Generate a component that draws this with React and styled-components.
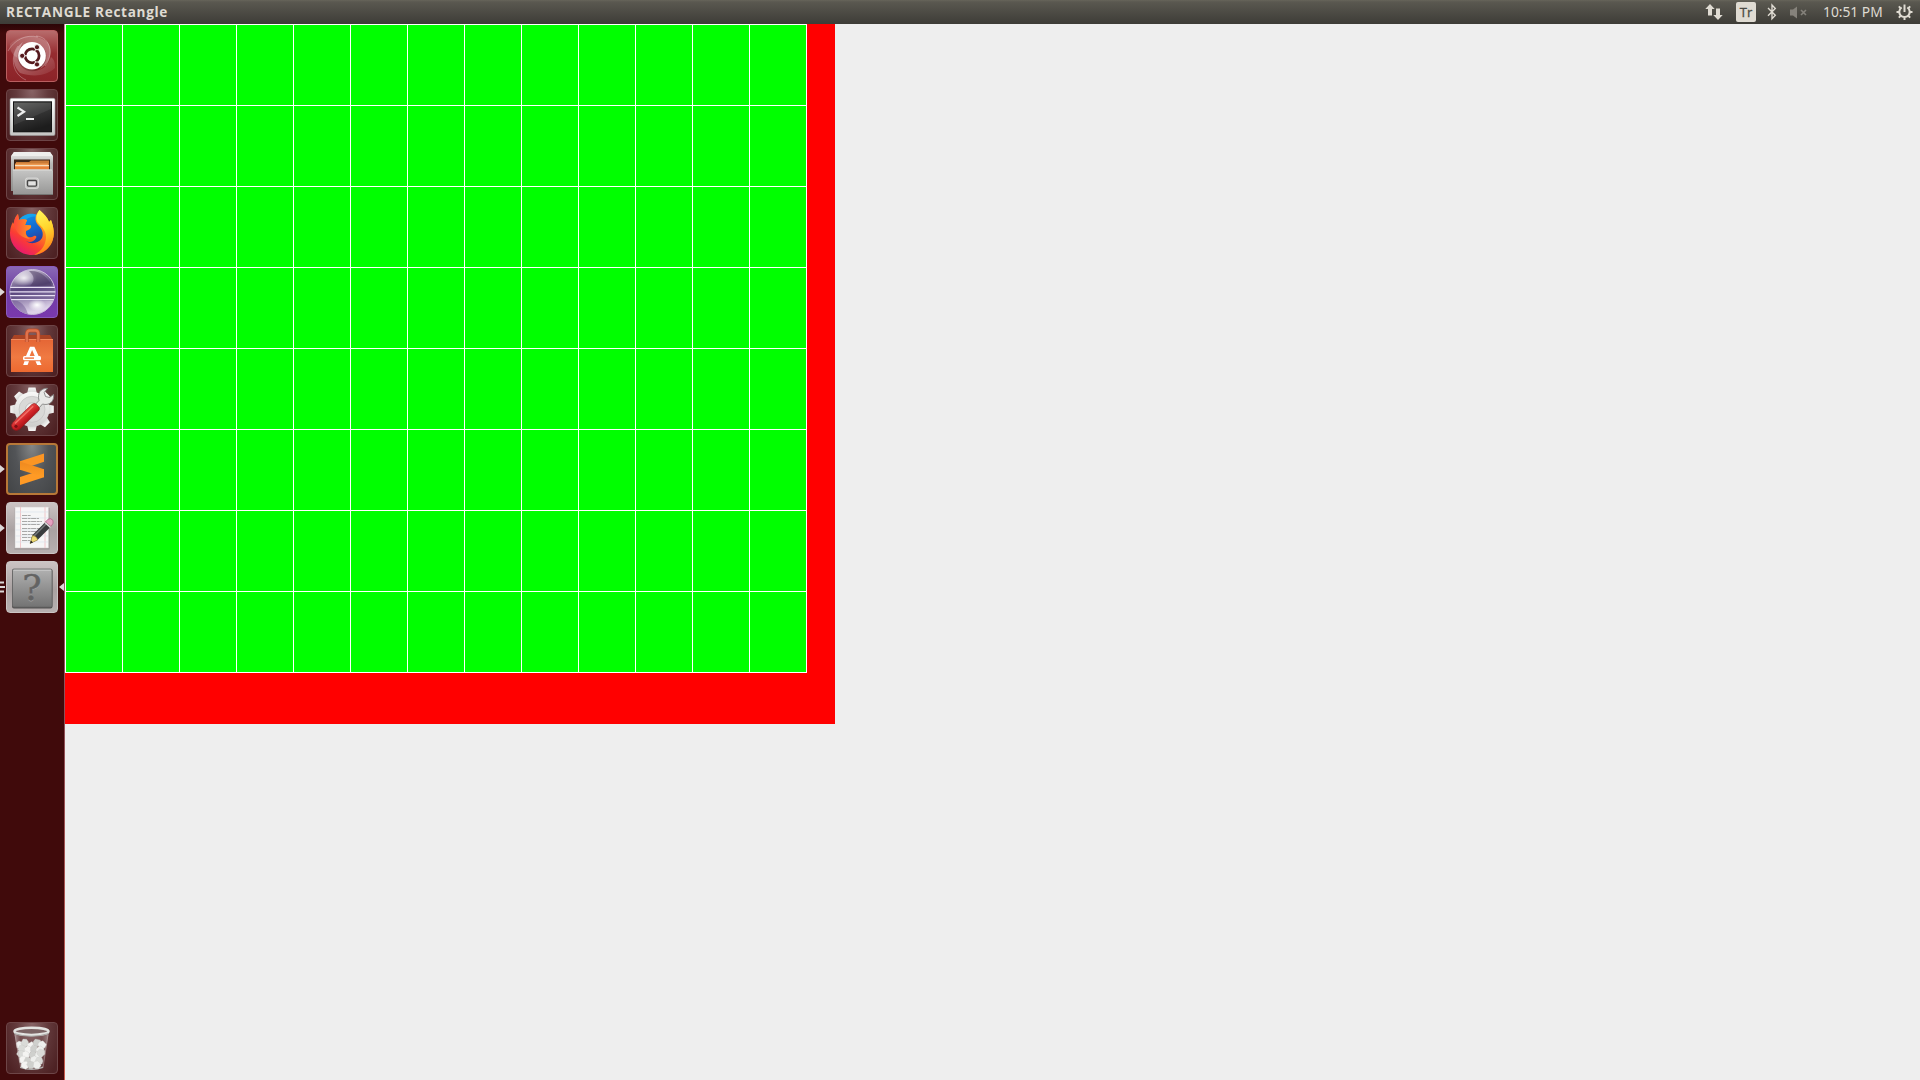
import React from "react";
import styled, { createGlobalStyle, css } from "styled-components";

const Global = createGlobalStyle`
  html, body { margin: 0; padding: 0; }
  body { background: #eeeeee; overflow: hidden; font-family: "Noto Sans", "Open Sans", sans-serif; }
`;

const Desktop = styled.div`
  display: flex;
  flex-direction: column;
  width: 1920px;
  height: 1080px;
  background: #eeeeee;
`;

const TopBar = styled.header`
  display: flex;
  align-items: center;
  justify-content: space-between;
  box-sizing: border-box;
  flex: none;
  height: 24px;
  padding: 0 7px 0 6px;
  color: #dfdbd2;
  background: linear-gradient(#67655a 0, #5a5850 2px, #3d3c37 100%);
`;

const Title = styled.h1`
  margin: 0;
  font: 700 13.6px/24px "Open Sans", "Noto Sans", sans-serif;
  letter-spacing: 0.68px;
  white-space: nowrap;
`;

const Tray = styled.div`
  display: flex;
  align-items: center;
  height: 24px;
`;

const TrayIcon = styled.svg`
  display: block;
  flex: none;
  margin-right: ${(p) => p.$gap || 0}px;
`;

const Keyboard = styled.span`
  width: 20px;
  height: 20px;
  margin-right: 11px;
  border-radius: 2px;
  background: #dfdbd2;
  color: #4b4a44;
  font: 400 13px/21px "Open Sans", "Noto Sans", sans-serif;
  -webkit-text-stroke: 0.3px #4b4a44;
  text-align: center;
`;

const Clock = styled.time`
  width: 61px;
  margin-right: 12px;
  font: 400 13.8px/24px "Noto Sans", sans-serif;
  white-space: nowrap;
`;

const Workspace = styled.div`
  display: flex;
  flex: 1;
  min-height: 0;
`;

const Launcher = styled.nav`
  display: flex;
  flex-direction: column;
  box-sizing: border-box;
  flex: none;
  width: 64px;
  padding: 6px 0 6px 6px;
  gap: 7px;
  background: linear-gradient(#2b0506 0, #400a0b 9px, #400a0b 100%);
`;

const LauncherEdge = styled.div`
  flex: none;
  width: 1px;
  background: linear-gradient(#c08a98 0, #a8707c 40%, #8c5058 65%, #c85a4c 100%);
`;

const tones = {
  red: css`background: linear-gradient(#b86c6c, #962c30 45%, #8c2328); border-color: #b95f60;`,
  dark: css`background: radial-gradient(ellipse at 50% 0, #886466 0, #633a3c 45%, #4e2224 90%); border-color: #6d4547;`,
  purple: css`background: linear-gradient(#8a68b5, #6f3fa3 45%, #7a38ae); border-color: #8a5bbd;`,
  slate: css`background: radial-gradient(ellipse at 50% 0, #858787, #525457 50%, #424446); border: 2px solid #b87838;`,
  silver: css`background: linear-gradient(#cbc3c3, #aaa2a2 55%, #b7b0b0); border-color: #cbc5c5;`,
};

const Tile = styled.div`
  position: relative;
  box-sizing: border-box;
  flex: none;
  width: 52px;
  height: 52px;
  margin-top: ${(p) => (p.$last ? "auto" : 0)};
  border: 1px solid transparent;
  border-radius: 4px;
  background-origin: border-box;
  ${(p) => tones[p.$tone]}
`;

const Art = styled.svg`
  position: absolute;
  inset: ${(p) => (p.$thick ? "-2px" : "-1px")};
  width: 52px;
  height: 52px;
`;

const Marker = styled.svg`
  position: absolute;
  top: ${(p) => (p.$thick ? 17.5 : 18.5)}px;
  left: ${(p) => (p.$right ? 52 : p.$thick ? -8 : -7)}px;
`;

const Canvas = styled.main`
  box-sizing: border-box;
  flex: none;
  width: 770px;
  height: 700px;
  background: #ff0000;
`;

const Grid = styled.div`
  display: grid;
  box-sizing: border-box;
  grid-template-columns: repeat(13, 57px);
  grid-auto-rows: 81px;
  width: 742px;
  height: 649px;
  border-top: 1px solid #fff;
  border-left: 1px solid #fff;
`;

const Cell = styled.div`
  background: #00ff00;
  border-right: 1px solid #fff;
  border-bottom: 1px solid #fff;
`;

const Dash = () => (
  <>
    <defs>
      <linearGradient id="swA" x1="0" y1="0" x2="1" y2="1">
        <stop offset="0" stopColor="#fff" stopOpacity=".05" />
        <stop offset="1" stopColor="#fff" stopOpacity=".4" />
      </linearGradient>
      <linearGradient id="swB" x1="1" y1="1" x2="0" y2="0">
        <stop offset="0" stopColor="#fff" stopOpacity=".05" />
        <stop offset="1" stopColor="#fff" stopOpacity=".4" />
      </linearGradient>
    </defs>
    <path d="M4 14C16 3 34 5 42 13C48 22 43 34 34 39C42 27 36 13 24 13C15 13 11 20 12 28C4 24 4 18 4 14Z" fill="url(#swA)" />
    <path d="M49 38C38 48 24 46 14 43C4 33 7 19 17 12C10 23 14 37 25 40C35 42 41 37 45 27C49 30 49 34 49 38Z" fill="url(#swB)" />
    <path d="M30 6C45 7 48 25 39 36M20 50C6 44 4 27 12 16M2 21C8 10 20 4 32 7" fill="none" stroke="#fff" strokeOpacity=".28" />
    <circle cx="26" cy="26.8" r="14.4" fill="#4a0e12" fillOpacity=".3" />
    <circle cx="26" cy="25.8" r="13.8" fill="#fff" />
    <circle cx="26.1" cy="25.8" r="7" fill="none" stroke="#55191d" strokeWidth="2.8" />
    <path d="M26 25.8L32 36.2M26 25.8L14 25.8M26 25.8L32 15.4" stroke="#fff" strokeWidth="1" />
    <g fill="#55191d" stroke="#fff" strokeWidth=".9">
      <circle cx="16.2" cy="25.8" r="2.6" /><circle cx="31" cy="17.2" r="2.6" /><circle cx="31" cy="34.4" r="2.6" />
    </g>
  </>
);

const Terminal = () => (
  <>
    <defs>
      <linearGradient id="tmF" x2="0" y2="1"><stop stopColor="#fff" /><stop offset="1" stopColor="#c5c5c3" /></linearGradient>
      <linearGradient id="tmS" x2=".35" y2="1"><stop stopColor="#5b5c5a" /><stop offset=".5" stopColor="#353535" /><stop offset="1" stopColor="#1d1d1d" /></linearGradient>
    </defs>
    <rect x="4" y="9.3" width="45" height="37.2" rx="1.5" fill="url(#tmF)" stroke="#999" strokeWidth=".6" />
    <rect x="7" y="12.3" width="39" height="31" fill="#141414" />
    <rect x="8" y="13.5" width="37" height="29" fill="url(#tmS)" />
    <path d="M8 13.5H45V20L8 36Z" fill="#fff" fillOpacity=".07" />
    <path d="M11.5 18.5L18 22.7L11.5 27" fill="none" stroke="#eee" strokeWidth="2.2" />
    <path d="M20 30H28" stroke="#eee" strokeWidth="2" />
  </>
);

const Files = () => (
  <>
    <defs>
      <linearGradient id="flA" x2="0" y2="1"><stop stopColor="#ededeb" /><stop offset=".3" stopColor="#b9b9b7" /><stop offset="1" stopColor="#8e8e8c" /></linearGradient>
      <linearGradient id="flB" x2="0" y2="1"><stop stopColor="#c6c6c5" /><stop offset="1" stopColor="#969695" /></linearGradient>
    </defs>
    <path d="M8 4H44L47 8V43H5V8Z" fill="url(#flA)" />
    <path d="M8 4H44L46.5 8H5.5Z" fill="#efefed" />
    <rect x="8" y="11.5" width="36" height="11" fill="#3c2518" />
    <path d="M10 14H23L25 12.5H43V22H10Z" fill="#c97a36" />
    <path d="M9 15.5H42V22H9Z" fill="#ee9a51" />
    <path d="M9 17H43V18.5H9Z" fill="#f8dcb8" />
    <path d="M9 18.5H43V22H9Z" fill="#e8823a" />
    <path d="M7 21.5H45L47 23V46Q47 47 46 47H8Q7 47 7 46Z" fill="url(#flB)" />
    <path d="M7 22H46" stroke="#dededc" />
    <path d="M7 46.5H47" stroke="#747472" />
    <rect x="19.5" y="30" width="13" height="10.5" rx="2" fill="#c5c5c3" stroke="#dededd" strokeWidth=".8" />
    <rect x="21.5" y="32.5" width="9" height="5.6" rx="1" fill="#e2e2e1" stroke="#464646" strokeWidth="1.4" />
  </>
);

const Firefox = () => (
  <>
    <defs>
      <linearGradient id="fxR" x1=".85" y1="0" x2=".2" y2="1"><stop stopColor="#ffcf2e" /><stop offset=".4" stopColor="#ff8a1c" /><stop offset=".7" stopColor="#fb3c34" /><stop offset="1" stopColor="#e3127b" /></linearGradient>
      <linearGradient id="fxY" x1=".3" y1="0" x2=".5" y2="1"><stop stopColor="#fff45a" /><stop offset=".45" stopColor="#ffd52c" /><stop offset="1" stopColor="#ff7a17" /></linearGradient>
      <linearGradient id="fxB" x2=".4" y2="1"><stop stopColor="#159bf0" /><stop offset=".55" stopColor="#1269cf" /><stop offset="1" stopColor="#303490" /></linearGradient>
      <linearGradient id="fxL" x1="0" x2="1"><stop stopColor="#ff473c" /><stop offset="1" stopColor="#ff9820" /></linearGradient>
    </defs>
    <circle cx="26" cy="24" r="17" fill="url(#fxB)" />
    <path d="M13 13C15 10 18 8 22 7C28 6 33 8 35 12L32 10C24 8 19 13 17 16Z" fill="#14a4ee" />
    <path d="M33.5 3C38 7 42 11 43 15L45 13C48 21 49 28 46 35C42 44 34 48 26 48C14 48 4 39 4 26C4 22 5 18 7 15L8 17C8 13 9 10 12 7L13 13C16 12 19 12 21 13L19 18L25 18.5C26 22 22 23 20 24L20 27C21 31 25 31 28 29C30 28 31 30 30 31C28 35 23 36 20 34C25 38 33 36 36 31C38 26 36 22 32 18C28 13 29 8 33.5 3Z" fill="url(#fxR)" />
    <path d="M33.5 3C38 7 42 11 43 15L45 13C48 21 49 28 46 35C43 42 36 47 28 48C36 44 40 37 40 30C40 24 36 20 33 17C29 13 30 8 33.5 3Z" fill="url(#fxY)" />
    <path d="M12 7L13 13C16 12 19 12 21 13L19 18L25 18.5C25 22 21 23 20 24C19 27 21 31 25 32C15 31 10 26 8 17C8 13 9 10 12 7Z" fill="url(#fxL)" />
  </>
);

const Eclipse = () => (
  <>
    <defs>
      <linearGradient id="ecA" x2=".25" y2="1"><stop stopColor="#f0ecf5" /><stop offset=".24" stopColor="#a093b2" /><stop offset=".48" stopColor="#57467a" /><stop offset=".68" stopColor="#9585ae" /><stop offset="1" stopColor="#ddd2e9" /></linearGradient>
      <radialGradient id="ecB"><stop stopColor="#fff" /><stop offset="1" stopColor="#fff" stopOpacity="0" /></radialGradient>
      <clipPath id="ecC"><circle cx="26.5" cy="26" r="22.8" /></clipPath>
    </defs>
    <circle cx="26.5" cy="26" r="22.5" fill="url(#ecA)" stroke="#c9bdd9" strokeWidth="1" />
    <g clipPath="url(#ecC)">
      <ellipse cx="18" cy="12" rx="13" ry="8" fill="url(#ecB)" fillOpacity=".85" />
      <path d="M23 5C35 4 42 12 46 20H24C29 15 29 10 23 5Z" fill="#493960" fillOpacity=".5" />
      <path d="M4 34C13 33 20 39 22 49C11 47 5 40 4 34Z" fill="#6b5290" fillOpacity=".45" />
      <path d="M3 20.5H50V34.5H3Z" fill="#58447e" fillOpacity=".6" />
      <ellipse cx="31" cy="39" rx="9" ry="6" fill="url(#ecB)" />
      <path d="M3 21.4H50M3 25.8H50M3 29.7H50M3 33.7H50" stroke="#e8e0f3" strokeWidth="1.25" />
    </g>
  </>
);

const Software = () => (
  <>
    <defs><linearGradient id="sfA" x2="0" y2="1"><stop stopColor="#e46535" /><stop offset=".55" stopColor="#f07a42" /><stop offset="1" stopColor="#ed6930" /></linearGradient></defs>
    <path d="M5 15L8 10H44L47 15Z" fill="#a94324" />
    <rect x="5" y="14" width="42" height="33" rx=".5" fill="url(#sfA)" />
    <path d="M5 14.5H47" stroke="#f18a5c" />
    <path d="M20.8 17V9Q21 5.5 24 5.5H29.5Q32.3 5.5 32.3 9V17" fill="none" stroke="#b64a29" strokeWidth="3.8" />
    <path d="M20.8 17V9Q21 5.5 24 5.5H29.5Q32.3 5.5 32.3 9V17" fill="none" stroke="#e0724c" strokeWidth="2.5" />
    <path d="M19.8 31.5L24 21.7H28.4L32.8 31.5H29L26.1 25L23.4 31.5Z" fill="#fff" />
    <rect x="17" y="31" width="18" height="4.2" rx="1.5" fill="#fff" />
    <path d="M18.5 33.1H28" stroke="#ee7640" strokeWidth="1.4" />
    <path d="M18.5 36.3H23L21.6 40H17.2ZM29.5 36.3H33.8L35.5 40H31.2Z" fill="#fff" />
  </>
);

const teeth = [0, 45, 90, 135, 180, 225, 270, 315];
const Settings = () => (
  <>
    <defs>
      <linearGradient id="stG" x2="0" y2="1"><stop stopColor="#f8f8f7" /><stop offset="1" stopColor="#cececc" /></linearGradient>
      <linearGradient id="stR" x1=".3" y1=".3" x2=".7" y2=".75"><stop stopColor="#ef5a52" /><stop offset=".5" stopColor="#cf2226" /><stop offset="1" stopColor="#8f090e" /></linearGradient>
    </defs>
    <g fill="url(#stG)">
      {teeth.map((a) => <path key={a} d="M21 10L22.5 3.5H29.5L31 10Z" transform={`rotate(${a} 26 25.3)`} />)}
      <circle cx="26" cy="25.3" r="17.5" />
    </g>
    <circle cx="26" cy="25.3" r="13" fill="#d9d9d7" stroke="#c2c2c0" strokeWidth=".7" />
    <circle cx="26" cy="25.3" r="6.5" fill="#eeeeed" stroke="#b2b2b0" strokeWidth=".7" />
    <path d="M26 24L33 16.5C31 9 35 4 41.5 4.3L38.2 8.5L39.5 12.5L43.5 13.5L47.6 10.5C48.5 17.5 43 22 36.5 20L29.5 28Z" fill="#e8e8e6" stroke="#858583" strokeWidth=".9" />
    <path d="M25.8 20.5Q28.3 18.4 30.5 20.5L32.7 22.7Q34.5 25 32.3 27L14 45Q10.8 47.8 7.2 45.3Q4 41.5 6.6 38.7Z" fill="url(#stR)" stroke="#8c1418" strokeWidth=".6" />
    <path d="M9 39.5L27.2 22.2" stroke="#ff8e83" strokeWidth="1.4" strokeOpacity=".65" />
    <circle cx="10" cy="42.3" r="1.6" fill="#7b1014" />
  </>
);

const Sublime = () => (
  <>
    <defs><linearGradient id="sbA" x2="0" y2="1"><stop stopColor="#ef8920" /><stop offset="1" stopColor="#ff9d24" /></linearGradient></defs>
    <path d="M14 18.3L38 10.5V18.7L14 26.7Z" fill="#fb9524" />
    <path d="M14 34L38 26.2V34.3L14 42Z" fill="#ff9a25" />
    <path d="M14 18.5L38 26.2V34.2L14 26.7Z" fill="url(#sbA)" />
  </>
);

const Gedit = () => (
  <>
    <rect x="8.5" y="6" width="35" height="41.5" fill="#756f6f" fillOpacity=".45" />
    <rect x="9" y="5" width="33.5" height="41" fill="#f6f6f6" stroke="#d2cece" strokeWidth=".6" />
    <path d="M14.5 5V46M39 5V46" stroke="#f0bcc0" strokeWidth=".8" />
    <path d="M9.5 10H42M9.5 16H42M9.5 22H42M9.5 28H42M9.5 34H42M9.5 40H42" stroke="#d9e2ec" strokeWidth=".6" />
    <path d="M16 13.5H25M16 16.5H33M16 19.5H36M16 22.5H34M16 26.5H35M16 29.5H31M16 32.5H29M16 35.5H27M16 38.5H24" stroke="#a8a8a8" strokeWidth="1.1" strokeDasharray="5 .6 3 .5" />
    <path d="M24 41.5L26.5 33L40 19.5L45 24.5L31.5 38Z" fill="#393c3d" />
    <path d="M28 34L41 21" stroke="#777b7c" strokeWidth="1.5" />
    <path d="M39.5 20L42 17.2Q45 15.5 47 18.5Q48 21 45 24.5Z" fill="#e6a1c0" stroke="#a95c7e" strokeWidth=".7" />
    <path d="M39 20.5L44.5 25.5" stroke="#dedede" strokeWidth="1.6" />
    <path d="M24 41.5L26.5 33.5Q31 34 31.7 38Z" fill="#eedb73" stroke="#8c7c37" strokeWidth=".5" />
    <path d="M24 41.5L25 38.5L27 40.5Z" fill="#222" />
  </>
);

const Glyph = styled.text`
  font: 400 36px "DejaVu Serif", serif;
  text-anchor: middle;
`;

const Unknown = () => (
  <>
    <defs><linearGradient id="unA" x2="0" y2="1"><stop stopColor="#b1b1b1" /><stop offset="1" stopColor="#737373" /></linearGradient></defs>
    <rect x="6" y="8" width="40.5" height="39.5" rx="2" fill="#535050" />
    <rect x="6.5" y="8" width="39.5" height="38" rx="1.5" fill="url(#unA)" stroke="#666" strokeWidth=".8" />
    <path d="M7.5 9.3H45" stroke="#c8c8c8" />
    <Glyph x="26" y="40" fill="#aaa">?</Glyph>
    <Glyph x="26" y="39" fill="#636363" stroke="#636363" strokeWidth=".5">?</Glyph>
  </>
);

const paper = [[14,23],[19,21],[25,24],[31,21],[36,23],[16,27],[22,28],[28,27],[34,28],[15,32],[20,33],[27,33],[33,33],[35,31],[17,38],[22,39],[28,38],[33,39],[19,43],[25,43],[31,43]];
const Trash = () => (
  <>
    <defs><linearGradient id="trA"><stop stopColor="#fff" stopOpacity=".5" /><stop offset=".18" stopColor="#fff" stopOpacity=".08" /><stop offset=".8" stopColor="#fff" stopOpacity=".08" /><stop offset="1" stopColor="#fff" stopOpacity=".4" /></linearGradient></defs>
    <path d="M8 9L14 46Q26 50 37 46L43 9Z" fill="url(#trA)" />
    <path d="M14 44.5Q26 49 37 44.5V46Q26 50 14 46Z" fill="#b0b0af" />
    {paper.map(([x, y], i) => (
      <path key={i} d="M-4 -2L-1 -4L2 -3L4 -1L3 3L0 4L-3 3Z" transform={`translate(${x} ${y}) rotate(${i * 37})`} fill={["#eeefed", "#dadbd8", "#f4f4f2", "#cfd0cd"][i % 4]} stroke="#c0c0bd" strokeWidth=".25" />
    ))}
    <path d="M9 13L15 46M42 13L37 46" stroke="#c2adad" strokeOpacity=".55" strokeWidth=".8" />
    <ellipse cx="25.5" cy="9.3" rx="17" ry="3.6" fill="#7c6465" stroke="#e3e3e1" strokeWidth="2.5" />
    <path d="M8 11.5Q25 17 43 11.5" fill="none" stroke="#a8a8a6" />
  </>
);

const items = [
  { name: "dash", tone: "red", Icon: Dash },
  { name: "terminal", tone: "dark", Icon: Terminal },
  { name: "files", tone: "dark", Icon: Files },
  { name: "firefox", tone: "dark", Icon: Firefox },
  { name: "eclipse", tone: "purple", Icon: Eclipse, running: 1 },
  { name: "software", tone: "dark", Icon: Software },
  { name: "settings", tone: "dark", Icon: Settings },
  { name: "sublime", tone: "slate", Icon: Sublime, running: 1 },
  { name: "gedit", tone: "silver", Icon: Gedit, running: 1 },
  { name: "unknown", tone: "silver", Icon: Unknown, running: 3, active: true },
  { name: "trash", tone: "dark", Icon: Trash, last: true },
];

function LauncherItem({ tone, Icon, running, active, last }) {
  const thick = tone === "slate";
  return (
    <Tile $tone={tone} $last={last}>
      <Art $thick={thick} viewBox="0 0 52 52"><Icon /></Art>
      {running === 1 && (
        <Marker $thick={thick} width="5" height="12" viewBox="0 0 5 12"><path d="M0 2L4.8 6L0 10Z" fill="#dcd7d7" /></Marker>
      )}
      {running === 3 && (
        <Marker width="5" height="12" viewBox="0 0 5 12"><path d="M0 1.5H4M0 6H5M0 10.5H4" stroke="#dcd7d7" strokeWidth="2" /></Marker>
      )}
      {active && (
        <Marker $right width="5" height="12" viewBox="0 0 5 12"><path d="M5 2L0 6L5 10Z" fill="#dcd7d7" /></Marker>
      )}
    </Tile>
  );
}

export default function App() {
  return (
    <Desktop>
      <Global />
      <TopBar>
        <Title>RECTANGLE Rectangle</Title>
        <Tray>
          <TrayIcon $gap={13} width="18" height="18" viewBox="0 0 18 18" fill="#dfdbd2">
            <path d="M5 1L9.7 6H7V12.5H3V6H.3ZM11 5.5H15V12H17.7L13 17L8.3 12H11Z" />
          </TrayIcon>
          <Keyboard>Tr</Keyboard>
          <TrayIcon $gap={13} width="10" height="18" viewBox="0 0 10 18" fill="none" stroke="#dfdbd2" strokeWidth="1.4">
            <path d="M1 5L8.3 12.3L5 15.8V2L8.3 5.5L1 12.8" />
          </TrayIcon>
          <TrayIcon $gap={15} width="18" height="14" viewBox="0 0 18 14">
            <path d="M0 4.5H3L7 1.5V13.5L3 10.5H0Z" fill="#85827b" />
            <path d="M11 5L16 10M16 5L11 10" stroke="#85827b" strokeWidth="1.6" />
          </TrayIcon>
          <Clock>10:51 PM</Clock>
          <TrayIcon width="17" height="18" viewBox="-8.5 -9 17 18" stroke="#dfdbd2">
            <path d="M-2.8 -4.5A5.2 5.2 0 1 0 2.8 -4.5" fill="none" strokeWidth="2" />
            <path d="M0 -7.5V0" strokeWidth="2" />
            {[45, 90, 135, 180, 225, 270, 315].map((a) => <path key={a} d="M0 -5.5V-8" strokeWidth="2" transform={`rotate(${a})`} />)}
          </TrayIcon>
        </Tray>
      </TopBar>
      <Workspace>
        <Launcher>
          {items.map((item) => <LauncherItem key={item.name} {...item} />)}
        </Launcher>
        <LauncherEdge />
        <Canvas>
          <Grid>
            {Array.from({ length: 104 }, (_, i) => <Cell key={i} />)}
          </Grid>
        </Canvas>
      </Workspace>
    </Desktop>
  );
}
